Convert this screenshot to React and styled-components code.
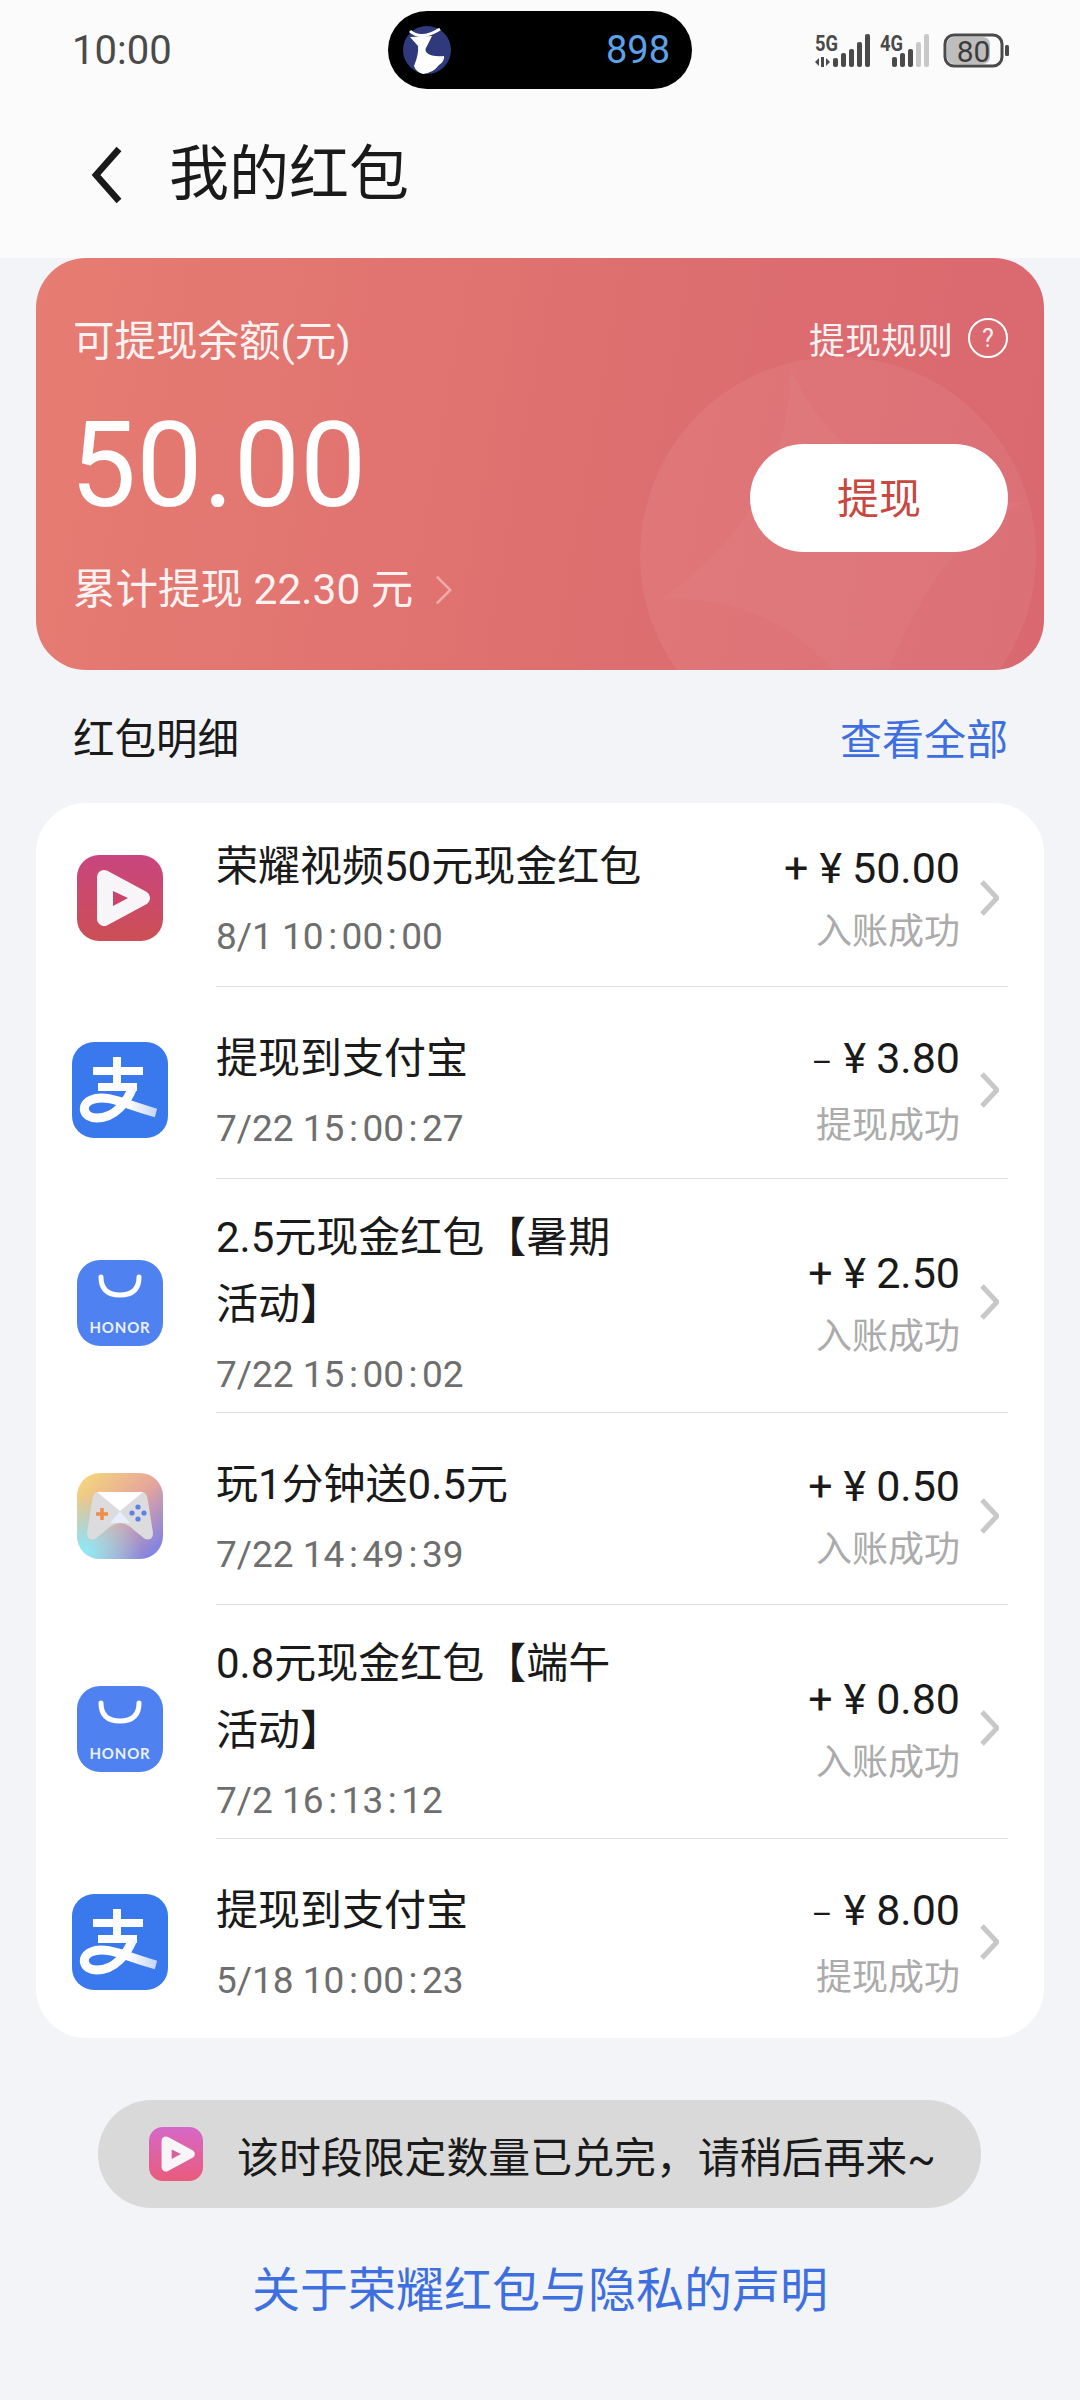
import React from "react";
import styled, { createGlobalStyle } from "styled-components";

const records = [
  { icon: "video", title: "荣耀视频50元现金红包", date: "8/1 10:00:00", sign: "+", amount: "50.00", status: "入账成功" },
  { icon: "alipay", title: "提现到支付宝", date: "7/22 15:00:27", sign: "–", amount: "3.80", status: "提现成功" },
  { icon: "honor", title: "2.5元现金红包【暑期活动】", date: "7/22 15:00:02", sign: "+", amount: "2.50", status: "入账成功", wrapped: true },
  { icon: "game", title: "玩1分钟送0.5元", date: "7/22 14:49:39", sign: "+", amount: "0.50", status: "入账成功" },
  { icon: "honor", title: "0.8元现金红包【端午活动】", date: "7/2 16:13:12", sign: "+", amount: "0.80", status: "入账成功", wrapped: true },
  { icon: "alipay", title: "提现到支付宝", date: "5/18 10:00:23", sign: "–", amount: "8.00", status: "提现成功" },
];

function DeerLogo() {
  return (
    <svg width="48" height="48" viewBox="0 0 48 48">
      <circle cx="24" cy="24" r="24" fill="#2f3a7c" />
      <path d="M7 5Q18 15 37 3" fill="none" stroke="#fff" strokeWidth="3" />
      <path d="M7 11L29 10L24 20Q21 24 24 27Q29 31 41 30Q42 35 36 39Q30 47 20 48Q13 46 11 40Q16 28 15 20Z" fill="#fff" />
    </svg>
  );
}

function StatusIcons() {
  const strong = [[833, 58], [841, 53], [849, 49], [857, 42], [865, 34]];
  const second = [[892, 57, "#4a4a4a"], [900, 53, "#4a4a4a"], [908, 49, "#4a4a4a"], [916, 42, "#c8c8c8"], [924, 34, "#c8c8c8"]];
  return (
    <svg width="196" height="36" viewBox="814 32 196 36">
      <text x="815" y="51" fontFamily="Roboto" fontWeight="700" fontSize="22" fill="#4a4a4a" textLength="23" lengthAdjust="spacingAndGlyphs">5G</text>
      <path d="M815 62l4-4v8zM821 57h3v10h-3zM826 58l4 4-4 4z" fill="#4a4a4a" />
      {strong.map(([x, y]) => (
        <rect key={x} x={x} y={y} width="5" height={67 - y} rx="2" fill="#4a4a4a" />
      ))}
      <text x="880" y="51" fontFamily="Roboto" fontWeight="700" fontSize="22" fill="#4a4a4a" textLength="23" lengthAdjust="spacingAndGlyphs">4G</text>
      {second.map(([x, y, c]) => (
        <rect key={x} x={x} y={y} width="5" height={67 - y} rx="2" fill={c} />
      ))}
      <rect x="945" y="35" width="57" height="31" rx="9" fill="#fbfbfb" stroke="#4a4a4a" strokeWidth="3" />
      <rect x="947" y="37" width="43" height="27" rx="7" fill="#bdbdbd" />
      <rect x="1005" y="45" width="4" height="11" rx="1.5" fill="#4a4a4a" />
      <text x="973.5" y="62" textAnchor="middle" fontFamily="Roboto" fontSize="30" fill="#3c3c3c">80</text>
    </svg>
  );
}

function PlayMark({ id, top, bottom, inner }) {
  return (
    <svg width="100%" height="100%" viewBox="0 0 86 86">
      <defs>
        <linearGradient id={id} x1="0" y1="0" x2="0" y2="1">
          <stop offset="0" stopColor={top} />
          <stop offset="1" stopColor={bottom} />
        </linearGradient>
      </defs>
      <rect width="86" height="86" rx="22" fill={`url(#${id})`} />
      <path d="M27 22L66 43L27 64Z" fill="#f7f5f7" stroke="#f7f5f7" strokeWidth="14" strokeLinejoin="round" />
      <path d="M36 36L51 43L36 51Z" fill={inner} />
    </svg>
  );
}

function AlipayMark() {
  return (
    <svg width="96" height="96" viewBox="0 0 96 96">
      <defs>
        <linearGradient id="alipaySwoosh" x1="0" y1="0" x2="1" y2="0">
          <stop offset="0" stopColor="#fff" />
          <stop offset="0.6" stopColor="#fff" />
          <stop offset="1" stopColor="#c4d6f8" />
        </linearGradient>
      </defs>
      <rect width="96" height="96" rx="22" fill="#3a78ee" />
      <path d="M21 29H71M26 45H65M45 15V45" fill="none" stroke="#fff" strokeWidth="8" />
      <path d="M61 45C55 60 43 76 25 76C11 76 8 63 19 58C34 51 54 63 84 71" fill="none" stroke="url(#alipaySwoosh)" strokeWidth="9" />
    </svg>
  );
}

function HonorMark() {
  return (
    <svg width="86" height="86" viewBox="0 0 86 86">
      <rect width="86" height="86" rx="23" fill="#4f82f0" />
      <path d="M24 17Q24 35 43 35Q62 35 62 17" fill="none" stroke="#fff" strokeWidth="5" strokeLinecap="round" />
      <text x="43" y="73" textAnchor="middle" fontFamily="Lato" fontWeight="700" fontSize="15" letterSpacing="0.8" fill="#eaf1ff">HONOR</text>
    </svg>
  );
}

function GameMark() {
  return (
    <svg width="86" height="86" viewBox="0 0 86 86">
      <defs>
        <linearGradient id="gameBase" x1="0" y1="0" x2="1" y2="1">
          <stop offset="0" stopColor="#f6dc78" />
          <stop offset="0.5" stopColor="#e6a59c" />
          <stop offset="1" stopColor="#6a7cf2" />
        </linearGradient>
        <radialGradient id="gameCyan" cx="0.05" cy="0.95" r="0.7">
          <stop offset="0" stopColor="#86f0ff" />
          <stop offset="1" stopColor="#86f0ff" stopOpacity="0" />
        </radialGradient>
      </defs>
      <rect width="86" height="86" rx="23" fill="url(#gameBase)" />
      <rect width="86" height="86" rx="23" fill="url(#gameCyan)" />
      <path d="M20 19H66Q70 20 71 28L76 60Q76 68 68 66L58 58Q50 50 43 50Q36 50 28 58L18 66Q10 68 10 60L15 28Q16 20 20 19Z" fill="#dcdbdd" />
      <path d="M20 19H66L43 38Z" fill="#fff" />
      <path d="M43 38L53 50H33Z" fill="#e6eefc" />
      <path d="M25 35V47M19 41H31" stroke="#ee8d4a" strokeWidth="3.5" />
      <g fill="#5b82e6">
        <circle cx="61" cy="34" r="2.6" />
        <circle cx="55" cy="40" r="2.6" />
        <circle cx="67" cy="40" r="2.6" />
        <circle cx="61" cy="46" r="2.6" />
      </g>
    </svg>
  );
}

function AppIcon({ children }) {
  return <IconTile>{children}</IconTile>;
}

const marks = {
  video: <AppIcon><PlayMark id="videoTile" top="#c9457f" bottom="#cc4f55" inner="#cc4468" /></AppIcon>,
  alipay: <AlipayMark />,
  honor: <HonorMark />,
  game: <GameMark />,
};

function Chevron({ width = 19, height = 36, color = "#c8c8c8", stroke = 5 }) {
  return (
    <svg width={width} height={height} viewBox="0 0 19 36" preserveAspectRatio="none">
      <path d="M2 2L17 18L2 34" fill="none" stroke={color} strokeWidth={stroke} />
    </svg>
  );
}

function DateText({ value }) {
  const parts = value.split(":");
  return (
    <DateLine>
      {parts.map((part, i) => (
        <React.Fragment key={i}>
          {i > 0 && <Colon>:</Colon>}
          {part}
        </React.Fragment>
      ))}
    </DateLine>
  );
}

export default function App() {
  return (
    <Page>
      <GlobalStyle />
      <Header>
        <StatusBar>
          <Clock>10:00</Clock>
          <Island>
            <DeerLogo />
            <IslandNumber>898</IslandNumber>
          </Island>
          <StatusRight>
            <StatusIcons />
          </StatusRight>
        </StatusBar>
        <TitleBar>
          <svg width="34" height="58" viewBox="0 0 34 58">
            <path d="M29 3L6 29L29 55" fill="none" stroke="#1a1a1a" strokeWidth="6.5" />
          </svg>
          <PageTitle>我的红包</PageTitle>
        </TitleBar>
      </Header>

      <BalanceCard>
        <CardArt width="1008" height="412" viewBox="36 258 1008 412">
          <circle cx="838" cy="555" r="198" fill="#fff" fillOpacity="0.06" />
          <path d="M790 368Q790 510 660 600Q790 590 870 720Q930 540 1023 503Q850 500 790 368Z" fill="#fff" fillOpacity="0.035" />
        </CardArt>
        <CardTop>
          <BalanceLabel>可提现余额(元)</BalanceLabel>
          <Rules>
            提现规则
            <Help>?</Help>
          </Rules>
        </CardTop>
        <CardMain>
          <div>
            <Balance>50.00</Balance>
            <Total>
              累计提现 22.30 元
              <Chevron width={17} height={30} color="rgba(255,255,255,0.4)" stroke={3} />
            </Total>
          </div>
          <Withdraw>提现</Withdraw>
        </CardMain>
      </BalanceCard>

      <SectionHead>
        <SectionTitle>红包明细</SectionTitle>
        <SeeAll>查看全部</SeeAll>
      </SectionHead>

      <List>
        {records.map((r, i) => (
          <Row key={i} $wrapped={r.wrapped}>
            <IconSlot>{marks[r.icon]}</IconSlot>
            <RowBody>
              <RowText>
                <RowTitle>{r.title}</RowTitle>
                <DateText value={r.date} />
              </RowText>
              <RowAmount>
                <Amount>
                  <Sign $minus={r.sign === "–"}>{r.sign}</Sign>
                  <Yen>¥</Yen>
                  {r.amount}
                </Amount>
                <Status>{r.status}</Status>
              </RowAmount>
              <Chevron />
            </RowBody>
          </Row>
        ))}
      </List>

      <Notice>
        <NoticeIcon>
          <PlayMark id="noticeTile" top="#d668c8" bottom="#e95b7c" inner="#d9609f" />
        </NoticeIcon>
        <NoticeText>该时段限定数量已兑完，请稍后再来~</NoticeText>
      </Notice>

      <Statement>关于荣耀红包与隐私的声明</Statement>
    </Page>
  );
}

const GlobalStyle = createGlobalStyle`
  body {
    margin: 0;
    background: #f2f4f8;
    font-family: Roboto, "Noto Sans CJK SC", sans-serif;
  }
`;

const Page = styled.div`
  width: 1080px;
  min-height: 2400px;
  background: #f2f4f8;
  color: #1a1a1a;
`;

const Header = styled.header`
  background: #fbfbfb;
  height: 258px;
`;

const StatusBar = styled.div`
  display: grid;
  grid-template-columns: 1fr auto 1fr;
  align-items: center;
  height: 100px;
  padding: 0 70px;
`;

const Clock = styled.span`
  margin-left: 2px;
  font-size: 40px;
  color: #4a4a4a;
`;

const Island = styled.div`
  display: flex;
  align-items: center;
  justify-content: space-between;
  width: 304px;
  height: 78px;
  padding: 0 22px 0 15px;
  box-sizing: border-box;
  border-radius: 39px;
  background: #000;
`;

const IslandNumber = styled.span`
  font-size: 38px;
  color: #5da2e8;
`;

const StatusRight = styled.div`
  display: flex;
  justify-content: flex-end;
`;

const TitleBar = styled.div`
  display: flex;
  align-items: center;
  gap: 45px;
  height: 150px;
  padding-left: 90px;
`;

const PageTitle = styled.h1`
  margin: 0;
  font-size: 60px;
  font-weight: 400;
  line-height: 70px;
`;

const BalanceCard = styled.section`
  position: relative;
  overflow: hidden;
  height: 412px;
  margin: 0 36px;
  padding: 55px 36px 0 37px;
  box-sizing: border-box;
  border-radius: 50px;
  background: linear-gradient(100deg, #e67c72 0%, #de6f6f 55%, #d96870 100%);
  color: #fff;
`;

const CardArt = styled.svg`
  position: absolute;
  top: 0;
  left: 0;
`;

const CardTop = styled.div`
  position: relative;
  display: flex;
  align-items: center;
  justify-content: space-between;
  height: 50px;
`;

const BalanceLabel = styled.span`
  font-size: 41.5px;
  color: rgba(255, 255, 255, 0.92);
`;

const Rules = styled.span`
  display: flex;
  align-items: center;
  gap: 15px;
  font-size: 36px;
  color: rgba(255, 255, 255, 0.92);
`;

const Help = styled.span`
  display: flex;
  align-items: center;
  justify-content: center;
  width: 40px;
  height: 40px;
  box-sizing: border-box;
  border: 2.5px solid #fff;
  border-radius: 50%;
  font-size: 25px;
`;

const CardMain = styled.div`
  position: relative;
  display: flex;
  align-items: center;
  justify-content: space-between;
  margin-top: 43px;
`;

const Balance = styled.div`
  margin-left: -3px;
  font-size: 118px;
  line-height: 120px;
`;

const Total = styled.div`
  display: flex;
  align-items: center;
  gap: 22px;
  margin-top: 39px;
  font-size: 42.5px;
  line-height: 50px;
  color: rgba(255, 255, 255, 0.92);
`;

const Withdraw = styled.button`
  width: 258px;
  height: 108px;
  margin-bottom: 26px;
  padding: 0 0 4px;
  border: 0;
  border-radius: 54px;
  background: #fff;
  color: #c8473f;
  font-family: inherit;
  font-size: 42px;
`;

const SectionHead = styled.div`
  display: flex;
  align-items: center;
  justify-content: space-between;
  height: 132px;
  padding: 0 72px 1px 73px;
`;

const SectionTitle = styled.h2`
  margin: 0;
  font-size: 41.5px;
  font-weight: 400;
`;

const SeeAll = styled.span`
  font-size: 42px;
  color: #3d6fe0;
`;

const List = styled.section`
  margin: 0 36px;
  border-radius: 50px;
  background: #fff;
  overflow: hidden;
`;

const IconSlot = styled.div`
  display: flex;
  flex: 0 0 168px;
  align-items: center;
  justify-content: center;
  margin-right: 12px;
  padding: var(--top) 0 var(--bottom);
  svg {
    display: block;
  }
`;

const RowBody = styled.div`
  display: flex;
  flex: 1;
  align-items: center;
  margin-right: 36px;
  padding: var(--top) 9px var(--bottom) 0;
  border-bottom: 1px solid #dfdfdf;
`;

const Row = styled.article`
  --top: 38px;
  --bottom: 24px;
  ${({ $wrapped }) => $wrapped && "--top: 25px; --bottom: 12px;"}
  display: flex;
  &:first-child {
    --top: 30px;
  }
  &:last-child {
    --bottom: 32px;
  }
  &:last-child ${RowBody} {
    border-bottom: 0;
  }
`;

const IconTile = styled.div`
  width: 86px;
  height: 86px;
`;

const RowText = styled.div`
  flex: 1;
  min-width: 0;
`;

const RowTitle = styled.div`
  max-width: 430px;
  font-size: 42px;
  line-height: 67px;
`;

const DateLine = styled.div`
  margin-top: 12px;
  font-size: 37px;
  line-height: 50px;
  color: #6e6e6e;
`;

const Colon = styled.span`
  margin: 0 4.5px;
`;

const RowAmount = styled.div`
  margin-right: 20px;
  padding-top: 5px;
  text-align: right;
`;

const Amount = styled.div`
  font-size: 43px;
  line-height: 50px;
`;

const Sign = styled.span`
  margin-right: 11px;
  font-size: ${({ $minus }) => ($minus ? "32px" : "43px")};
`;

const Yen = styled.span`
  margin-right: 10px;
`;

const Status = styled.div`
  margin-top: 14px;
  font-size: 36px;
  line-height: 50px;
  color: #ababab;
`;

const Notice = styled.div`
  display: flex;
  align-items: center;
  gap: 34px;
  width: 883px;
  height: 108px;
  margin: 62px 0 0 98px;
  padding-left: 51px;
  box-sizing: border-box;
  border-radius: 54px;
  background: #d9d9d9;
`;

const NoticeIcon = styled.div`
  width: 54px;
  height: 54px;
  svg {
    display: block;
  }
`;

const NoticeText = styled.span`
  font-size: 41.9px;
  white-space: nowrap;
`;

const Statement = styled.div`
  margin-top: 53px;
  font-size: 48px;
  line-height: 60px;
  text-align: center;
  color: #3d6fe0;
`;
